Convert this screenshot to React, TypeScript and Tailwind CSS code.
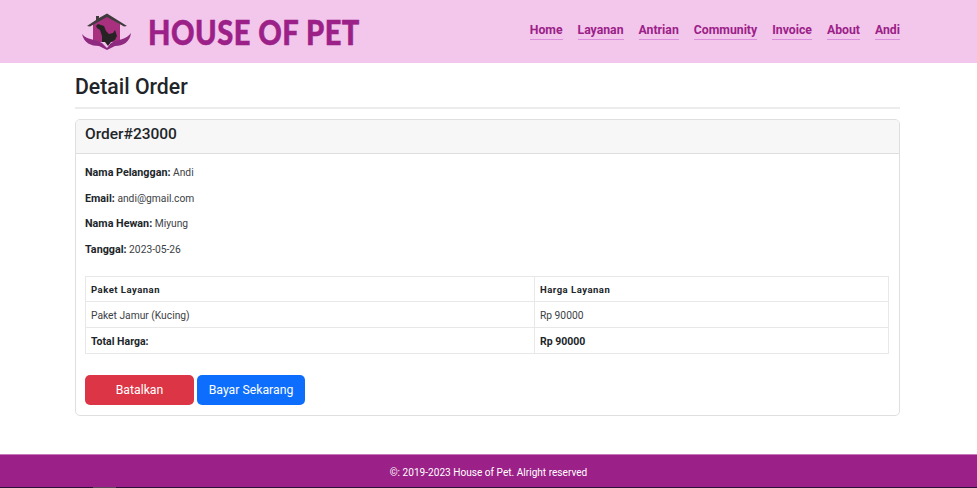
const navItems = ["Home", "Layanan", "Antrian", "Community", "Invoice", "About", "Andi"];

function Logo() {
  return (
    <svg width="54" height="40" viewBox="0 0 54 40" className="shrink-0 mt-[3px] -ml-[1px]">
      <path d="M13 11 L27 3 L40 11 L40 29 L13 29 Z" fill="#a8307f" />
      <path d="M7 13 L16 7 L16 3 L19 3 L19 5 L27 0.5 L47 13 L44 13.5 L27 4 L10 13.5 Z" fill="#3f3a3c" />
      <path d="M18 11 L21 12 L24 13 L26 18 L29 21 L33 20 L35 17 L36 20 L37 23 L35 27 L31 29 L28 33 L25 29 L22 29 L22 23 L20 17 L17 15 L16 13 Z" fill="#272224" />
      <path d="M2 21 C7 27 15 26 22 30 L27 35 L31 30 C38 26 46 27 51 20 C50 29 43 33 35 33 L27 37 L19 33 C11 33 4 30 2 21 Z" fill="#8e2a80" />
    </svg>
  );
}

export default function App() {
  return (
    <div className="min-h-[488px] flex flex-col bg-white text-[#212529] font-['Roboto','Noto_Sans',sans-serif]">
      <header className="h-[63px] bg-[#f3c6ec] flex items-center pl-[81px] pr-[77px] justify-between">
        <div className="flex items-center gap-[14px]">
          <Logo />
          <span className="inline-block origin-left scale-x-[0.83] font-['Lato',sans-serif] font-black text-[35px] leading-none text-[#9b2188] tracking-[0.6px] [-webkit-text-stroke:0.5px_#9b2188]">
            HOUSE OF PET
          </span>
        </div>
        <nav className="flex gap-[15px] -mt-[2px]">
          {navItems.map((item) => (
            <a key={item} className="text-[12.25px] leading-[16px] font-bold text-[#9b2188] border-b border-[#d98fdc] pb-[1px]">
              {item}
            </a>
          ))}
        </nav>
      </header>

      <main className="flex-1 pl-[75px] pr-[77px]">
        <h1 className="mt-[10px] text-[21.25px] leading-[28px] font-medium text-[#212529] pb-[6px] border-b-2 border-[#ececec]">
          Detail Order
        </h1>
        <section className="mt-[10px] border border-[#dfdfdf] rounded-[5px] overflow-hidden">
          <div className="h-[34px] bg-[#f7f7f7] border-b border-[#dfdfdf] flex items-center pl-[9px] pb-[3px]">
            <h2 className="text-[15.5px] font-medium">Order#23000</h2>
          </div>
          <div className="pl-[9px] pr-[10px] pt-[11px] pb-[10px] text-[10.25px] text-[#3c4146]">
            <div className="flex flex-col gap-[10.67px] leading-[15px]">
              <p><b className="font-bold text-[10.75px] text-[#212529]">Nama Pelanggan:</b> Andi</p>
              <p><b className="font-bold text-[10.75px] text-[#212529]">Email:</b> andi@gmail.com</p>
              <p><b className="font-bold text-[10.75px] text-[#212529]">Nama Hewan:</b> Miyung</p>
              <p><b className="font-bold text-[10.75px] text-[#212529]">Tanggal:</b> 2023-05-26</p>
            </div>
            <table className="mt-[19px] w-full border-collapse border border-[#e8e8e8] table-fixed">
              <tbody>
                <tr className="h-[25px]">
                  <td className="w-[449px] border border-[#e8e8e8] px-[5px] pt-[2px] text-[9.5px] font-bold tracking-[0.5px] text-[#212529]">Paket Layanan</td>
                  <td className="border border-[#e8e8e8] px-[5px] pt-[2px] text-[9.5px] font-bold tracking-[0.5px] text-[#212529]">Harga Layanan</td>
                </tr>
                <tr className="h-[26px]">
                  <td className="border border-[#e8e8e8] px-[5px] pt-[2px]">Paket Jamur (Kucing)</td>
                  <td className="border border-[#e8e8e8] px-[5px] pt-[2px]">Rp 90000</td>
                </tr>
                <tr className="h-[26px]">
                  <td className="border border-[#e8e8e8] px-[5px] pt-[2px] text-[10.5px] font-bold text-[#212529]">Total Harga:</td>
                  <td className="border border-[#e8e8e8] px-[5px] pt-[2px] text-[10.5px] font-bold text-[#212529]">Rp 90000</td>
                </tr>
              </tbody>
            </table>
            <div className="mt-[21px] flex gap-[3px]">
              <button className="w-[109px] h-[30px] rounded-[5px] bg-[#dc3545] text-white text-[12.25px]">Batalkan</button>
              <button className="w-[108px] h-[30px] rounded-[5px] bg-[#0d6efd] text-white text-[12.25px]">Bayar Sekarang</button>
            </div>
          </div>
        </section>
      </main>

      <footer className="h-[33px] bg-[#9b2188] border-t border-[#c878b8] flex items-center justify-center pt-[3px] text-white text-[10.1px]">
        ©: 2019-2023 House of Pet. Alright reserved
      </footer>
      <div className="h-px bg-[#2b1038] flex">
        <div className="ml-[93px] w-[23px] bg-[#5a4a5c]" />
      </div>
    </div>
  );
}
